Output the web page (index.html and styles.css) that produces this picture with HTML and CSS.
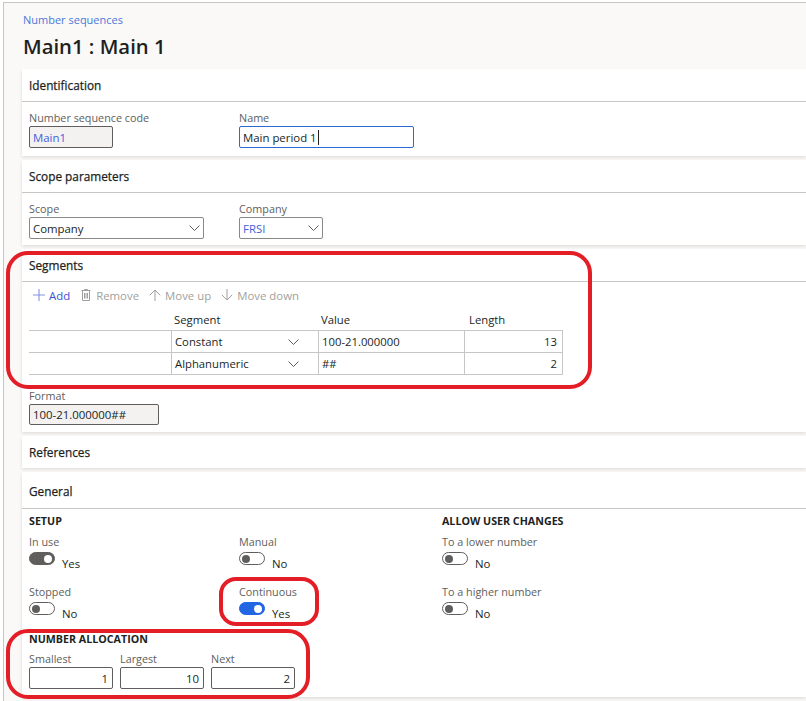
FILE: index.html
```html
<!DOCTYPE html>
<html lang="en">
<head>
<meta charset="utf-8">
<title>Number sequences - Main1</title>
<link rel="stylesheet" href="styles.css">
</head>
<body>
<div class="frame">
  <header class="page-head">
    <a class="crumb" href="#">Number sequences</a>
    <h1 class="title">Main1 : Main 1</h1>
  </header>

  <main class="cards">
    <section class="card">
      <div class="card-head">Identification</div>
      <div class="card-body row">
        <div class="field col1">
          <label>Number sequence code</label>
          <div class="input readonly link w84">Main1</div>
        </div>
        <div class="field">
          <label>Name</label>
          <div class="input focus w175">Main period 1<span class="caret"></span></div>
        </div>
      </div>
    </section>

    <section class="card">
      <div class="card-head">Scope parameters</div>
      <div class="card-body row short">
        <div class="field col1">
          <label>Scope</label>
          <div class="input select w175"><span>Company</span>
            <svg class="chev" width="11" height="6" viewBox="0 0 11 6"><path d="M.5.5l5 5 5-5" fill="none" stroke="#605e5c" stroke-width="1"/></svg>
          </div>
        </div>
        <div class="field">
          <label>Company</label>
          <div class="input select w84"><span class="link">FRSI</span>
            <svg class="chev" width="11" height="6" viewBox="0 0 11 6"><path d="M.5.5l5 5 5-5" fill="none" stroke="#605e5c" stroke-width="1"/></svg>
          </div>
        </div>
      </div>
    </section>

    <section class="card">
      <div class="card-head">Segments</div>
      <div class="card-body seg-body">
        <div class="toolbar">
          <span class="tb-item active">
            <svg width="12" height="12" viewBox="0 0 12 12"><path d="M6 0v12M0 6h12" stroke="#8493e3" stroke-width="1.1" fill="none"/></svg>
            <span>Add</span>
          </span>
          <span class="tb-item">
            <svg width="12" height="12" viewBox="0 0 12 12"><path d="M1.5 1.5h9M4.5 1.5V.5h3v1M2.5 1.5v10h7v-10M4.5 4v5.5M6 4v5.5M7.5 4v5.5" stroke="#a19f9d" stroke-width="1" fill="none"/></svg>
            <span>Remove</span>
          </span>
          <span class="tb-item">
            <svg width="12" height="12" viewBox="0 0 12 12"><path d="M6 12V1M.8 6.2 6 1l5.2 5.2" stroke="#a19f9d" stroke-width="1" fill="none"/></svg>
            <span>Move up</span>
          </span>
          <span class="tb-item">
            <svg width="12" height="12" viewBox="0 0 12 12"><path d="M6 0v11M.8 5.8 6 11l5.2-5.2" stroke="#a19f9d" stroke-width="1" fill="none"/></svg>
            <span>Move down</span>
          </span>
        </div>

        <div class="seg-grid">
          <div class="gh"></div>
          <div class="gh">Segment</div>
          <div class="gh">Value</div>
          <div class="gh">Length</div>

          <div class="gc first top"></div>
          <div class="gc sel top"><span>Constant</span>
            <svg width="11" height="6" viewBox="0 0 11 6"><path d="M.5.5l5 5 5-5" fill="none" stroke="#605e5c" stroke-width="1"/></svg>
          </div>
          <div class="gc top">100-21.000000</div>
          <div class="gc num last top">13</div>

          <div class="gc first"></div>
          <div class="gc sel"><span>Alphanumeric</span>
            <svg width="11" height="6" viewBox="0 0 11 6"><path d="M.5.5l5 5 5-5" fill="none" stroke="#605e5c" stroke-width="1"/></svg>
          </div>
          <div class="gc">##</div>
          <div class="gc num last">2</div>
        </div>

        <div class="field format">
          <label>Format</label>
          <div class="input readonly w130 h21">100-21.000000##</div>
        </div>
      </div>
    </section>

    <section class="card">
      <div class="card-head plain">References</div>
    </section>

    <section class="card">
      <div class="card-head tall">General</div>
      <div class="card-body gen-body">
        <div class="gen-grid">
          <div class="sec-title span2">SETUP</div>
          <div class="sec-title">ALLOW USER CHANGES</div>

          <div class="tfield gap-a">
            <label>In use</label>
            <div class="trow"><span class="toggle on dark"></span><span class="tval">Yes</span></div>
          </div>
          <div class="tfield gap-a">
            <label>Manual</label>
            <div class="trow"><span class="toggle"></span><span class="tval">No</span></div>
          </div>
          <div class="tfield gap-a">
            <label>To a lower number</label>
            <div class="trow"><span class="toggle"></span><span class="tval">No</span></div>
          </div>

          <div class="tfield gap-b">
            <label>Stopped</label>
            <div class="trow"><span class="toggle"></span><span class="tval">No</span></div>
          </div>
          <div class="tfield gap-b">
            <label>Continuous</label>
            <div class="trow"><span class="toggle on blue"></span><span class="tval">Yes</span></div>
          </div>
          <div class="tfield gap-b">
            <label>To a higher number</label>
            <div class="trow"><span class="toggle"></span><span class="tval">No</span></div>
          </div>
        </div>

        <div class="alloc">
          <div class="sec-title">NUMBER ALLOCATION</div>
          <div class="alloc-row">
            <div class="field">
              <label>Smallest</label>
              <div class="input numeric w84">1</div>
            </div>
            <div class="field">
              <label>Largest</label>
              <div class="input numeric w84">10</div>
            </div>
            <div class="field">
              <label>Next</label>
              <div class="input numeric w84">2</div>
            </div>
          </div>
        </div>
      </div>
    </section>
  </main>
</div>

<div class="mark mark-segments"></div>
<div class="mark mark-continuous"></div>
<div class="mark mark-alloc"></div>
</body>
</html>
```

FILE: styles.css
```css
* { box-sizing: border-box; }

html, body {
  margin: 0;
  padding: 0;
}

body {
  position: relative;
  width: 806px;
  height: 701px;
  overflow: hidden;
  background: #ffffff;
  font-family: "Segoe UI", "Open Sans", "Noto Sans", sans-serif;
  font-size: 11px;
  color: #201f1e;
}

.frame {
  margin: 2px 0 0 3px;
  height: 699px;
  border-top: 1px solid #c8c6c4;
  border-left: 1px solid #c8c6c4;
  background: #faf9f8;
}

.page-head {
  padding: 9px 0 0 19px;
}

.crumb {
  display: block;
  font-size: 11px;
  line-height: 16px;
  color: #4a78d8;
  text-decoration: none;
}

.title {
  margin: 4px 0 0;
  font-size: 20.3px;
  line-height: 28px;
  font-weight: 600;
  color: #201f1e;
}

.cards {
  display: flex;
  flex-direction: column;
  gap: 4px;
  margin: 9px 0 0 18px;
}

.card {
  background: #ffffff;
  box-shadow: 0 1.6px 3.6px rgba(0, 0, 0, 0.12), 0 0.3px 0.9px rgba(0, 0, 0, 0.1);
}

.card-head {
  display: flex;
  align-items: center;
  height: 33px;
  padding: 0 7px;
  font-size: 11.8px;
  font-weight: 400;
  -webkit-text-stroke: 0.25px #201f1e;
  color: #201f1e;
  border-bottom: 1px solid #c8c6c4;
}

.card-head.plain {
  height: 32px;
  border-bottom: none;
}

.card-head.tall {
  height: 37px;
  padding-top: 1px;
}

.card-body {
  padding: 7px 7px 8px;
}

.card-body.short {
  padding-bottom: 6px;
}

.row {
  display: flex;
}

.col1 {
  width: 210px;
}

.field label,
.tfield label {
  display: block;
  font-size: 10.8px;
  line-height: 17px;
  color: #605e5c;
}

.input {
  display: flex;
  align-items: center;
  height: 22px;
  padding: 0 4px 0 3px;
  border: 1px solid #8a8886;
  border-radius: 2px;
  background: #ffffff;
  font-size: 11.4px;
  color: #201f1e;
  white-space: nowrap;
}

.input.h21 {
  height: 21px;
}

.input.readonly {
  background: #f3f2f1;
  border-color: #605e5c;
}

.input.focus {
  border-color: #2b6bd9;
}

.input.select {
  justify-content: space-between;
  padding-right: 3px;
}

.input.numeric {
  justify-content: flex-end;
  border-color: #605e5c;
}

.link {
  color: #4561d8;
}

.w84 { width: 84px; }
.w130 { width: 130px; }
.w175 { width: 175px; }

.caret {
  display: inline-block;
  width: 1px;
  height: 15px;
  margin-left: 1px;
  background: #201f1e;
}

/* Segments */
.seg-body {
  padding-top: 0;
  padding-bottom: 7px;
}

.toolbar {
  display: flex;
  align-items: center;
  gap: 10px;
  height: 26px;
  padding-left: 4px;
}

.tb-item {
  display: flex;
  align-items: center;
  gap: 4px;
  font-size: 11.4px;
  color: #a19f9d;
}

.tb-item.active {
  color: #3c50d6;
}

.seg-grid {
  display: grid;
  grid-template-columns: 142px 147px 146px 99px;
  width: 534px;
  font-size: 11.3px;
}

.gh {
  display: flex;
  align-items: center;
  height: 22px;
  padding-left: 3px;
  color: #201f1e;
}

.gh:first-child {
  padding-left: 0;
}

.gh:nth-child(4) {
  padding-left: 5px;
}

.gc {
  display: flex;
  align-items: center;
  height: 22px;
  padding: 0 5px 0 3px;
  border-bottom: 1px solid #c8c6c4;
  border-left: 1px solid #c8c6c4;
  color: #201f1e;
}

.gc.top {
  border-top: 1px solid #c8c6c4;
  height: 23px;
}

.gc.first {
  border-left: none;
}

.gc.last {
  border-right: 1px solid #c8c6c4;
}

.gc.sel {
  justify-content: space-between;
  padding-right: 19px;
}

.gc.num {
  justify-content: flex-end;
}

.format {
  margin-top: 12px;
}

/* General */
.gen-body {
  padding: 5px 7px 8px;
}

.gen-grid {
  display: grid;
  grid-template-columns: 210px 203px 1fr;
}

.sec-title {
  font-size: 10.7px;
  line-height: 14px;
  font-weight: 700;
  color: #201f1e;
}

.span2 {
  grid-column: span 2;
}

.tfield.gap-a {
  margin-top: 5px;
}

.tfield.gap-b {
  margin-top: 13px;
}

.trow {
  display: flex;
  align-items: flex-start;
  height: 20px;
}

.toggle {
  position: relative;
  flex: none;
  width: 26px;
  height: 13px;
  margin-top: 2px;
  border: 1px solid #605e5c;
  border-radius: 7px;
  background: #ffffff;
}

.toggle::after {
  content: "";
  position: absolute;
  top: 1.5px;
  left: 2px;
  width: 8px;
  height: 8px;
  border-radius: 50%;
  background: #605e5c;
}

.toggle.on::after {
  left: auto;
  right: 2px;
  background: #ffffff;
}

.toggle.dark {
  background: #605e5c;
}

.toggle.blue {
  background: #2266e3;
  border-color: #2266e3;
}

.tval {
  margin: 6px 0 0 7px;
  font-size: 11.4px;
  line-height: 16px;
  color: #201f1e;
}

.alloc {
  margin-top: 12px;
}

.alloc-row {
  display: flex;
  gap: 7px;
  margin-top: 4px;
}

/* Red annotation outlines */
.mark {
  position: absolute;
  border: 4px solid #e31e26;
  pointer-events: none;
}

.mark-segments {
  left: 6px;
  top: 251px;
  width: 586px;
  height: 138px;
  border-radius: 22px;
}

.mark-continuous {
  left: 219px;
  top: 577px;
  width: 100px;
  height: 49px;
  border-radius: 17px;
}

.mark-alloc {
  left: 6px;
  top: 629px;
  width: 304px;
  height: 70px;
  border-radius: 22px;
}
```
